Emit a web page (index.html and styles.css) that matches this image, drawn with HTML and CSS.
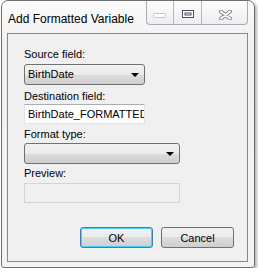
FILE: index.html
```html
<!DOCTYPE html>
<html lang="en">
<head>
    <meta charset="UTF-8">
    <title>Add Formatted Variable</title>
    <link rel="stylesheet" href="styles.css">
</head>
<body>
    <!-- Dialog window -->
    <div class="window">
        <div class="titlebar">
            <span class="title">Add Formatted Variable</span>
            <div class="caption-buttons">
                <div class="cap cap-min">
                    <svg width="14" height="6" viewBox="0 0 14 6"><rect x="0.5" y="0.5" width="12" height="4" rx="1" fill="#fff" stroke="#c4c4c4"/></svg>
                </div>
                <div class="cap cap-max">
                    <svg width="13" height="9" viewBox="0 0 13 9"><rect x="0.5" y="0.5" width="11" height="7" fill="#fff" stroke="#4a4f5a"/><rect x="3" y="3" width="6" height="2" fill="none" stroke="#4a4f5a"/></svg>
                </div>
                <div class="cap cap-close">
                    <svg width="13" height="10" viewBox="0 0 13 10">
                        <path d="M2 1.5 L11 8.5 M11 1.5 L2 8.5" stroke="#8a8d93" stroke-width="4" stroke-linecap="round"/>
                        <path d="M2 1.5 L11 8.5 M11 1.5 L2 8.5" stroke="#fff" stroke-width="2" stroke-linecap="round"/>
                    </svg>
                </div>
            </div>
        </div>

        <div class="client">
            <div class="fields">
                <label class="lbl lbl-source">Source field:</label>
                <div class="combo combo-source">
                    <span>BirthDate</span>
                    <span class="arrow"></span>
                </div>

                <label class="lbl lbl-dest">Destination field:</label>
                <input class="textbox" type="text" value="BirthDate_FORMATTED" readonly>

                <label class="lbl lbl-format">Format type:</label>
                <div class="combo combo-format">
                    <span></span>
                    <span class="arrow"></span>
                </div>

                <label class="lbl lbl-preview">Preview:</label>
                <div class="preview"></div>
            </div>

            <div class="actions">
                <button class="btn btn-default">OK</button>
                <button class="btn">Cancel</button>
            </div>
        </div>
    </div>
</body>
</html>
```

FILE: styles.css
```css
/* Page */
body {
    margin: 0;
    background: #fff;
    font-family: "Liberation Sans", Arial, sans-serif;
}

/* Window frame */
.window {
    box-sizing: border-box;
    width: 254px;
    height: 268px;
    margin-left: 1px;
    border: 1px solid #6f6f6f;
    border-radius: 7px 7px 3px 3px;
    background: linear-gradient(#fbfbfb, #f1f1f1 40px, #f3f3f3);
    box-shadow: 2px 2px 3px rgba(0, 0, 0, 0.3);
    display: flex;
    flex-direction: column;
}

/* Title bar */
.titlebar {
    height: 32px;
    display: flex;
    align-items: flex-start;
}

.title {
    padding: 11px 0 0 6px;
    font-size: 12px;
    line-height: 15px;
    color: #000;
}

.caption-buttons {
    margin-left: auto;
    margin-right: 6px;
    display: flex;
    height: 24px;
    border: 1px solid #a9acb2;
    border-top: none;
    border-radius: 0 0 4px 4px;
    background: linear-gradient(#fdfdfd, #eceef1);
    box-sizing: border-box;
}

.cap {
    display: flex;
    align-items: center;
    justify-content: center;
    box-sizing: border-box;
    height: 23px;
}

.cap-min {
    width: 27px;
    border-right: 1px solid #b6b9be;
    padding-top: 7px;
}

.cap-max {
    width: 28px;
    border-right: 1px solid #b6b9be;
    padding-top: 4px;
    padding-left: 2px;
}

.cap-close {
    width: 45px;
    padding-top: 4px;
    padding-left: 2px;
}

/* Client area */
.client {
    box-sizing: border-box;
    height: 229px;
    margin: 0 6px 0 5px;
    border: 1px solid #828790;
    background: #f0f0f0;
    padding: 14px 0 0 16px;
    font-size: 11px;
}

.fields {
    display: flex;
    flex-direction: column;
    align-items: flex-start;
}

.lbl {
    display: block;
    line-height: 13px;
    color: #000;
}

.lbl-dest { margin-top: 5px; }
.lbl-format { margin-top: 4px; }
.lbl-preview { margin-top: 3px; }

/* Drop-down lists */
.combo {
    box-sizing: border-box;
    height: 21px;
    margin-top: 3px;
    border: 1px solid #707070;
    border-radius: 3px;
    background: linear-gradient(#f2f2f2, #ebebeb 50%, #dddddd 50%, #cfcfcf);
    display: flex;
    align-items: center;
    justify-content: space-between;
    padding: 0 5px 0 3px;
    line-height: 13px;
}

.combo-source { width: 121px; }

.combo-format {
    width: 156px;
    margin-top: 2px;
}

.arrow {
    width: 0;
    height: 0;
    border-left: 4px solid transparent;
    border-right: 4px solid transparent;
    border-top: 4px solid #000;
    margin-top: 1px;
}

/* Text box */
.textbox {
    box-sizing: border-box;
    width: 121px;
    height: 20px;
    margin: 1px 0 0;
    padding: 0 0 0 3px;
    border: 1px solid #e2e3ea;
    border-top-color: #abadb3;
    background: #fff;
    font-family: "Liberation Sans", Arial, sans-serif;
    font-size: 11px;
    color: #000;
    outline: none;
}

/* Disabled preview box */
.preview {
    box-sizing: border-box;
    width: 156px;
    height: 20px;
    margin-top: 3px;
    border: 1px solid #d3d4d8;
    background: #f0f0f0;
}

/* Buttons */
.actions {
    display: flex;
    justify-content: flex-end;
    gap: 8px;
    margin: 24px 13px 0 0;
}

.btn {
    box-sizing: border-box;
    width: 73px;
    height: 21px;
    padding: 0;
    border: 1px solid #707070;
    border-radius: 3px;
    background: linear-gradient(#f2f2f2, #ebebeb 50%, #dddddd 50%, #cfcfcf);
    font-family: "Liberation Sans", Arial, sans-serif;
    font-size: 11px;
    color: #000;
}

/* Default (focused) button */
.btn-default {
    border-color: #3c7fb1;
    box-shadow: inset 0 0 0 1px #48d2f8;
}
```
